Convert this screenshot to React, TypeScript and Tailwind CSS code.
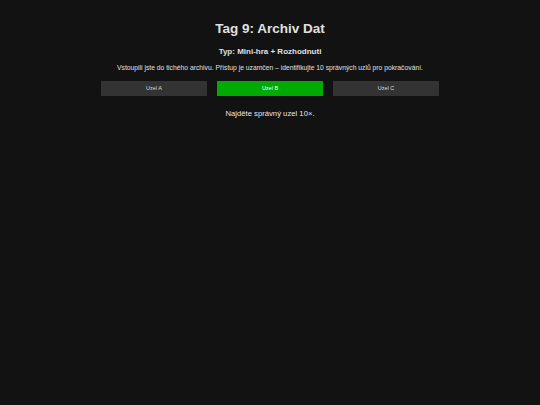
export default function App() {
  const nodes = ['Uzel A', 'Uzel B', 'Uzel C']
  const active = 1

  return (
    <div className="min-h-screen bg-[#121212] pt-[20px] text-center font-['Liberation_Sans',Arial,sans-serif] text-[#e0e0e0]">
      <h1 className="text-[13.5px] font-bold leading-[18px]">Tag 9: Archiv Dat</h1>
      <h2 className="mt-[8px] text-[8px] font-bold leading-[11px]">Typ: Mini-hra + Rozhodnuti</h2>
      <p className="mt-[6px] text-[6.75px] leading-[9px]">
        Vstoupili jste do tichého archivu. Přístup je uzamčen – identifikujte 10 správných uzlů pro pokračování.
      </p>
      <div className="mt-[9px] flex justify-center gap-[10px]">
        {nodes.map((n, i) => (
          <button
            key={n}
            className={
              i === active
                ? 'h-[15px] w-[106px] bg-[#00aa00] text-[5.5px] text-white'
                : 'h-[15px] w-[106px] bg-[#333333] text-[5.5px] text-[#dddddd]'
            }
          >
            {n}
          </button>
        ))}
      </div>
      <p className="mt-[13px] text-[7.7px] leading-[10px] text-[#e8e8e8]">Najděte správný uzel 10×.</p>
    </div>
  )
}
